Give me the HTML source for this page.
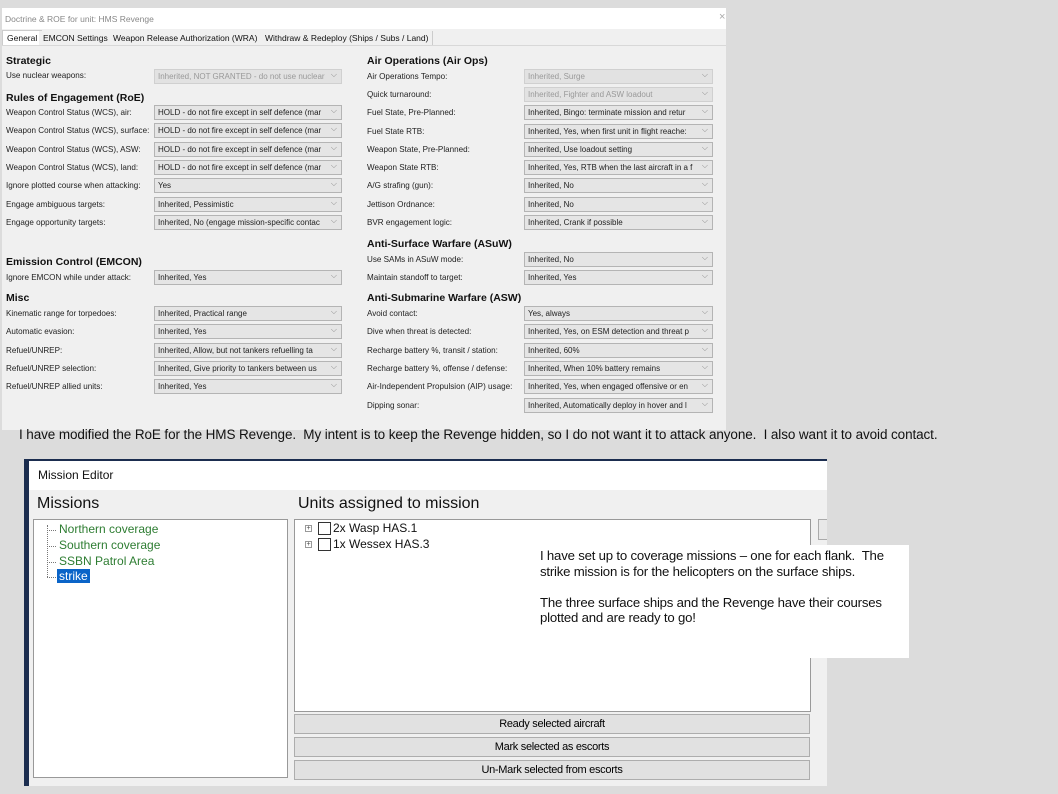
<!DOCTYPE html>
<html><head><meta charset="utf-8"><style>
*{margin:0;padding:0;box-sizing:border-box}
body{width:1058px;height:794px;background:#dcdcdc;position:relative;overflow:hidden;font-family:"Liberation Sans",Arial,sans-serif}
.a{position:absolute;white-space:nowrap}
.win{left:2px;top:8px;width:724px;height:422px;background:#f0f0f0}
.tb{left:2px;top:8px;width:724px;height:21px;background:#fff;font-size:8.5px;color:#888;padding:6px 0 0 3px}
.tab{top:31px;height:14px;font-size:8.5px;color:#111;padding:2px 4px 0;border-right:1px solid #ccc;background:#f0f0f0}
.h{font-size:10.5px;font-weight:bold;color:#111}
.l{font-size:8.1px;color:#222}
.c{height:15px;background:#e5e5e5;border:1px solid #b4b4b4;font-size:8px;color:#222;padding:2px 0 0 3px;overflow:hidden}
.c::after{content:"⌵";position:absolute;right:4px;top:0px;color:#888;font-size:8px}
.d{color:#999;background:#e2e2e2;border-color:#d0d0d0}
.L{width:188px}.R{width:189px}
.btn{left:294px;width:516px;height:20px;background:#e1e1e1;border:1px solid #adadad;font-size:11px;text-align:center;padding-top:3px;letter-spacing:-0.3px}
.g{font-size:12px;color:#2e7d32}
</style></head><body>
<div class="a win"></div>
<div class="a tb">Doctrine &amp; ROE for unit: HMS Revenge</div>
<div class="a" style="left:719px;top:11px;font-size:11px;color:#aaa">×</div>
<div class="a" style="left:2px;top:45px;width:724px;height:1px;background:#d8d8d8"></div>
<div class="a tab" style="left:2px;background:#fff;border:1px solid #ccc;border-bottom:none;height:15px;top:30px">General</div>
<div class="a tab" style="left:39px">EMCON Settings</div>
<div class="a tab" style="left:109px">Weapon Release Authorization (WRA)</div>
<div class="a tab" style="left:261px">Withdraw &amp; Redeploy (Ships / Subs / Land)</div>

<div class="a h" style="left:6px;top:55px">Strategic</div>
<div class="a l" style="left:6px;top:71px">Use nuclear weapons:</div>
<div class="a c L d" style="left:154px;top:69px">Inherited, NOT GRANTED - do not use nuclear</div>
<div class="a h" style="left:6px;top:92px">Rules of Engagement (RoE)</div>
<div class="a l" style="left:6px;top:108px">Weapon Control Status (WCS), air:</div>
<div class="a c L" style="left:154px;top:105px">HOLD - do not fire except in self defence (mar</div>
<div class="a l" style="left:6px;top:126px">Weapon Control Status (WCS), surface:</div>
<div class="a c L" style="left:154px;top:123px">HOLD - do not fire except in self defence (mar</div>
<div class="a l" style="left:6px;top:145px">Weapon Control Status (WCS), ASW:</div>
<div class="a c L" style="left:154px;top:142px">HOLD - do not fire except in self defence (mar</div>
<div class="a l" style="left:6px;top:163px">Weapon Control Status (WCS), land:</div>
<div class="a c L" style="left:154px;top:160px">HOLD - do not fire except in self defence (mar</div>
<div class="a l" style="left:6px;top:181px">Ignore plotted course when attacking:</div>
<div class="a c L" style="left:154px;top:178px">Yes</div>
<div class="a l" style="left:6px;top:200px">Engage ambiguous targets:</div>
<div class="a c L" style="left:154px;top:197px">Inherited, Pessimistic</div>
<div class="a l" style="left:6px;top:218px">Engage opportunity targets:</div>
<div class="a c L" style="left:154px;top:215px">Inherited, No (engage mission-specific contac</div>
<div class="a h" style="left:6px;top:256px">Emission Control (EMCON)</div>
<div class="a l" style="left:6px;top:273px">Ignore EMCON while under attack:</div>
<div class="a c L" style="left:154px;top:270px">Inherited, Yes</div>
<div class="a h" style="left:6px;top:292px">Misc</div>
<div class="a l" style="left:6px;top:309px">Kinematic range for torpedoes:</div>
<div class="a c L" style="left:154px;top:306px">Inherited, Practical range</div>
<div class="a l" style="left:6px;top:327px">Automatic evasion:</div>
<div class="a c L" style="left:154px;top:324px">Inherited, Yes</div>
<div class="a l" style="left:6px;top:346px">Refuel/UNREP:</div>
<div class="a c L" style="left:154px;top:343px">Inherited, Allow, but not tankers refuelling ta</div>
<div class="a l" style="left:6px;top:364px">Refuel/UNREP selection:</div>
<div class="a c L" style="left:154px;top:361px">Inherited, Give priority to tankers between us</div>
<div class="a l" style="left:6px;top:382px">Refuel/UNREP allied units:</div>
<div class="a c L" style="left:154px;top:379px">Inherited, Yes</div>

<div class="a h" style="left:367px;top:55px">Air Operations (Air Ops)</div>
<div class="a l" style="left:367px;top:72px">Air Operations Tempo:</div>
<div class="a c R d" style="left:524px;top:69px">Inherited, Surge</div>
<div class="a l" style="left:367px;top:90px">Quick turnaround:</div>
<div class="a c R d" style="left:524px;top:87px">Inherited, Fighter and ASW loadout</div>
<div class="a l" style="left:367px;top:108px">Fuel State, Pre-Planned:</div>
<div class="a c R" style="left:524px;top:105px">Inherited, Bingo: terminate mission and retur</div>
<div class="a l" style="left:367px;top:127px">Fuel State RTB:</div>
<div class="a c R" style="left:524px;top:124px">Inherited, Yes, when first unit in flight reache:</div>
<div class="a l" style="left:367px;top:145px">Weapon State, Pre-Planned:</div>
<div class="a c R" style="left:524px;top:142px">Inherited, Use loadout setting</div>
<div class="a l" style="left:367px;top:163px">Weapon State RTB:</div>
<div class="a c R" style="left:524px;top:160px">Inherited, Yes, RTB when the last aircraft in a f</div>
<div class="a l" style="left:367px;top:181px">A/G strafing (gun):</div>
<div class="a c R" style="left:524px;top:178px">Inherited, No</div>
<div class="a l" style="left:367px;top:200px">Jettison Ordnance:</div>
<div class="a c R" style="left:524px;top:197px">Inherited, No</div>
<div class="a l" style="left:367px;top:218px">BVR engagement logic:</div>
<div class="a c R" style="left:524px;top:215px">Inherited, Crank if possible</div>
<div class="a h" style="left:367px;top:238px">Anti-Surface Warfare (ASuW)</div>
<div class="a l" style="left:367px;top:255px">Use SAMs in ASuW mode:</div>
<div class="a c R" style="left:524px;top:252px">Inherited, No</div>
<div class="a l" style="left:367px;top:273px">Maintain standoff to target:</div>
<div class="a c R" style="left:524px;top:270px">Inherited, Yes</div>
<div class="a h" style="left:367px;top:292px">Anti-Submarine Warfare (ASW)</div>
<div class="a l" style="left:367px;top:309px">Avoid contact:</div>
<div class="a c R" style="left:524px;top:306px">Yes, always</div>
<div class="a l" style="left:367px;top:327px">Dive when threat is detected:</div>
<div class="a c R" style="left:524px;top:324px">Inherited, Yes, on ESM detection and threat p</div>
<div class="a l" style="left:367px;top:346px">Recharge battery %, transit / station:</div>
<div class="a c R" style="left:524px;top:343px">Inherited, 60%</div>
<div class="a l" style="left:367px;top:364px">Recharge battery %, offense / defense:</div>
<div class="a c R" style="left:524px;top:361px">Inherited, When 10% battery remains</div>
<div class="a l" style="left:367px;top:382px">Air-Independent Propulsion (AIP) usage:</div>
<div class="a c R" style="left:524px;top:379px">Inherited, Yes, when engaged offensive or en</div>
<div class="a l" style="left:367px;top:401px">Dipping sonar:</div>
<div class="a c R" style="left:524px;top:398px">Inherited, Automatically deploy in hover and l</div>

<div class="a" style="left:19px;top:427px;font-size:13.5px;color:#111;letter-spacing:-0.1px">I have modified the RoE for the HMS Revenge.&nbsp; My intent is to keep the Revenge hidden, so I do not want it to attack anyone.&nbsp; I also want it to avoid contact.</div>

<div class="a" style="left:24px;top:459px;width:803px;height:327px;background:#f0f0f0;border-left:5px solid #1b2d4f;border-top:2px solid #1b2d4f"></div>
<div class="a" style="left:29px;top:461px;width:798px;height:29px;background:#fff"></div>
<div class="a" style="left:38px;top:468px;font-size:12px;color:#111">Mission Editor</div>
<div class="a" style="left:37px;top:495px;font-size:16px;color:#111">Missions</div>
<div class="a" style="left:298px;top:495px;font-size:16px;color:#111">Units assigned to mission</div>
<div class="a" style="left:33px;top:519px;width:255px;height:259px;background:#fff;border:1px solid #999"></div>
<div class="a" style="left:47px;top:525px;width:1px;height:52px;border-left:1px dotted #777"></div>
<div class="a" style="left:47px;top:530px;width:9px;border-top:1px dotted #777"></div>
<div class="a" style="left:47px;top:546px;width:9px;border-top:1px dotted #777"></div>
<div class="a" style="left:47px;top:562px;width:9px;border-top:1px dotted #777"></div>
<div class="a" style="left:47px;top:577px;width:9px;border-top:1px dotted #777"></div>
<div class="a g" style="left:59px;top:522px">Northern coverage</div>
<div class="a g" style="left:59px;top:538px">Southern coverage</div>
<div class="a g" style="left:59px;top:554px">SSBN Patrol Area</div>
<div class="a" style="left:57px;top:569px;font-size:12px;color:#fff;background:#0a64c8;padding:0 2px">strike</div>
<div class="a" style="left:294px;top:519px;width:517px;height:193px;background:#fff;border:1px solid #999"></div>
<div class="a" style="left:818px;top:519px;width:9px;height:21px;background:#e8e8e8;border:1px solid #aaa;border-right:none"></div>
<div class="a" style="left:305px;top:525px;width:7px;height:7px;border:1px solid #999;font-size:7px;line-height:5px;text-align:center;color:#444">+</div>
<div class="a" style="left:305px;top:541px;width:7px;height:7px;border:1px solid #999;font-size:7px;line-height:5px;text-align:center;color:#444">+</div>
<div class="a" style="left:318px;top:522px;width:13px;height:13px;border:1px solid #333;background:#fff"></div>
<div class="a" style="left:318px;top:538px;width:13px;height:13px;border:1px solid #333;background:#fff"></div>
<div class="a" style="left:333px;top:521px;font-size:12px;color:#111">2x Wasp HAS.1</div>
<div class="a" style="left:333px;top:537px;font-size:12px;color:#111">1x Wessex HAS.3</div>
<div class="a btn" style="top:714px">Ready selected aircraft</div>
<div class="a btn" style="top:737px">Mark selected as escorts</div>
<div class="a btn" style="top:760px">Un-Mark selected from escorts</div>

<div class="a" style="left:533px;top:545px;width:376px;height:113px;background:#fff"></div>
<div class="a" style="left:540px;top:548px;font-size:13.2px;line-height:15.5px;color:#111;letter-spacing:-0.2px">I have set up to coverage missions – one for each flank.&nbsp; The<br>strike mission is for the helicopters on the surface ships.<br><br>The three surface ships and the Revenge have their courses<br>plotted and are ready to go!</div>
</body></html>
